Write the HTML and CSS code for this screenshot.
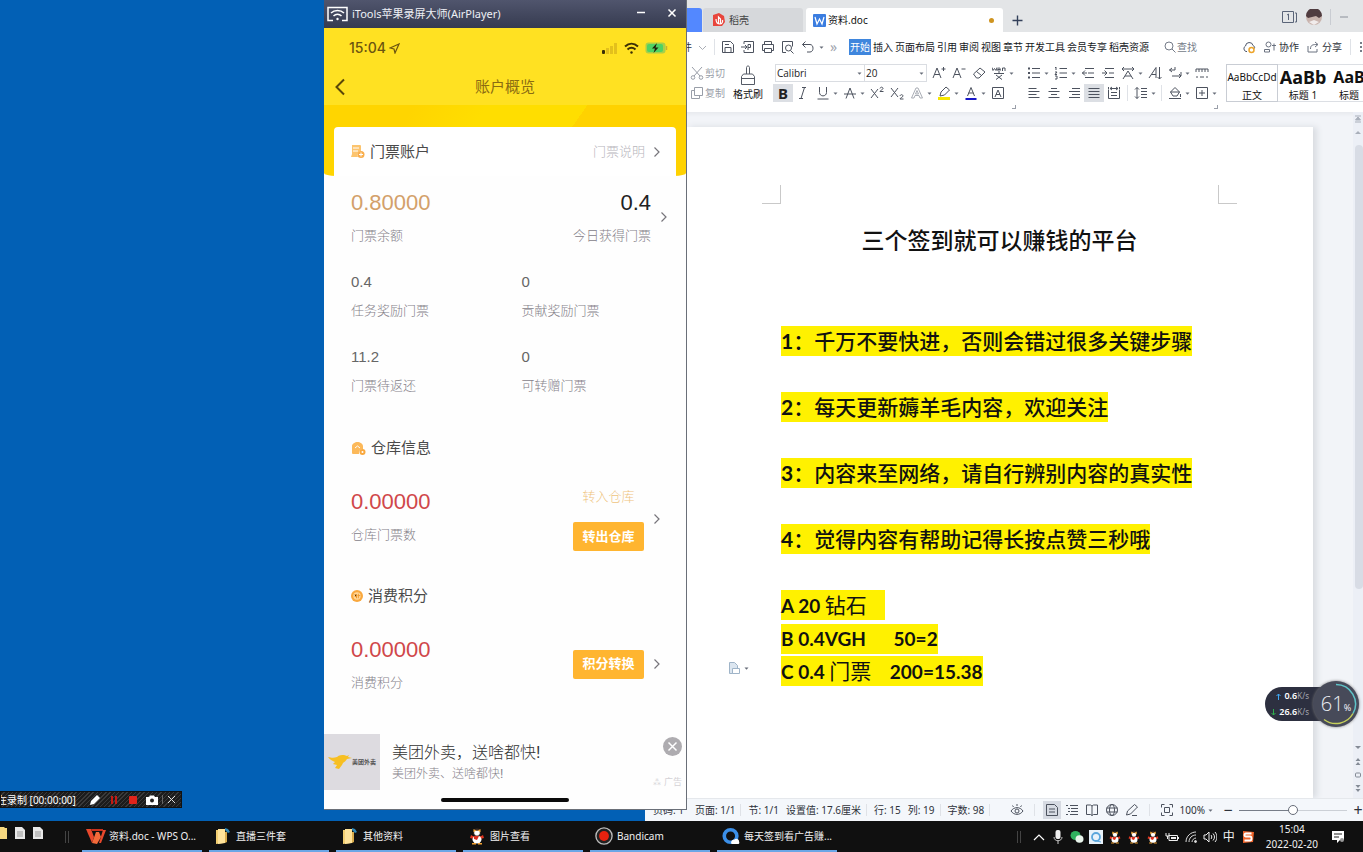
FILE: index.html
```html
<!DOCTYPE html>
<html lang="zh-CN">
<head>
<meta charset="utf-8">
<title>资料.doc - WPS Office</title>
<link rel="stylesheet" href="styles.css">
</head>
<body>
<svg class="defs" aria-hidden="true">
  <symbol id="chev" viewBox="0 0 10 12"><path d="M2.500 1.500l4.500 4.500-4.500 4.500" fill="none" stroke="currentColor" stroke-width="1.200"/></symbol>
  <symbol id="caret" viewBox="0 0 7 7"><path d="M1.500 2.500h4l-2 2.200z" fill="currentColor"/></symbol>
  <symbol id="folder" viewBox="0 0 18 18"><path d="M2 3h7l1 1v12l-8 1z" fill="#f3cf72"/><path d="M4 2h7v14l-7 1z" fill="#ffe39a"/><path d="M11 5h2v10l-2 1z" fill="#d8ab4c"/><path d="M11 1l3 1 2 3-2 1-3-3z" fill="#2f87b8"/></symbol>
  <symbol id="penguin" viewBox="0 0 18 18"><ellipse cx="9" cy="5.500" rx="3.800" ry="4" fill="#3b2a22"/><path d="M5.500 2l3.500 2 3.500-2v3h-7z" fill="#f2a93b"/><ellipse cx="9" cy="6" rx="2.800" ry="2.200" fill="#fff"/><path d="M3 8c3 2 9 2 12 0l1 3-4 1H6l-4-1z" fill="#e0351f"/><ellipse cx="9" cy="12.500" rx="4.500" ry="4" fill="#fff"/><path d="M6 9h5l-2 4-3-1z" fill="#d92c1c"/><path d="M4 16h4v1.500H4zM10 16h4v1.500h-4z" fill="#f0a030"/></symbol>
</svg>

<main class="desktop">
  <section class="wps" aria-label="WPS">
    <header class="tabs">
      <button class="home-tab" aria-label="首页"></button>
      <button class="tab">
        <svg width="12" height="14" viewBox="0 0 12 14"><path d="M0 2l6-2 5 3 1 6-3 4H0z" fill="#e8453c"/><path d="M5.500 11V4l2 2v5M3 6c0 3 1 5 4 5 2 0 3-2 2.500-4" fill="none" stroke="#fff" stroke-width="1.200"/></svg>
        <span>稻壳</span></button>
      <button class="tab active">
        <svg width="13" height="13" viewBox="0 0 13 13"><rect width="13" height="13" rx="1" fill="#3b7de0"/><path d="M2 3l2 7 2.500-5L9 10l2-7" fill="none" stroke="#fff" stroke-width="1.200"/></svg>
        <span>资料.doc</span><i class="dot"></i></button>
      <button class="new-tab" aria-label="新建"><svg width="11" height="11" viewBox="0 0 11 11"><path d="M5.500 .5v10M.5 5.500h10" stroke="#33405a" stroke-width="1.400"/></svg></button>
      <div class="win-right">
        <svg width="16" height="12" viewBox="0 0 16 12" fill="none" stroke="#5a6478"><path d="M.5 .5h11v11H.5zM13 2h1.500v9H13"/><path d="M5 4l1.500-1v6" /></svg>
        <svg width="16" height="16" viewBox="0 0 16 16"><circle cx="8" cy="8" r="8" fill="#c9b4ae"/><path d="M0 7a8 8 0 0 1 16 0l-3 2-3-2-4 1-4 1z" fill="#503c40"/><path d="M3 13l5-2 5 2-5 3z" fill="#f1ecec"/></svg>
        <i class="sep"></i>
        <svg width="10" height="10" viewBox="0 0 10 10"><path d="M1 5h8" stroke="#8b909a"/></svg>
      </div>
    </header>

    <nav class="menu">
      <div class="quick">
        <button class="file">文件</button>
        <svg width="9" height="9" viewBox="0 0 9 9" class="pale"><path d="M1 3l3.500 3.500L8 3" fill="none" stroke="currentColor"/></svg>
        <i class="sep"></i>
      </div>
      <div class="quick-icons">
        <button aria-label="保存"><svg viewBox="0 0 14 14"><path d="M1.500 1.500h8l3 3v8h-11zM4 12.500v-5h6v5M4 4.500h4"/></svg></button>
        <button aria-label="输出"><svg viewBox="0 0 14 14"><path d="M3 4V1.500h9.500v11H3V10M0 7h6M4 5l2 2-2 2M7 10V4.500h2.500v3H7"/></svg></button>
        <button aria-label="打印"><svg viewBox="0 0 14 14"><path d="M3.500 4.500v-3h7v3M3.500 10.500h-2v-6h11v6h-2M3.500 8.500h7v4h-7z"/></svg></button>
        <button aria-label="预览"><svg viewBox="0 0 14 14"><path d="M5 12.500H1.500v-11h10v5M9.500 10.500l3 3"/><circle cx="7.500" cy="8" r="3"/></svg></button>
        <button aria-label="撤销"><svg viewBox="0 0 14 14"><path d="M4.500 1.500l-3 3 3 3M1.500 4.500H9c4 0 4 7.500 0 7.500H6"/></svg></button>
        <svg class="caret"><use href="#caret"/></svg>
      </div>
      <span class="more">»</span>
      <div class="menu-items">
        <button class="current">开始</button><button>插入</button><button>页面布局</button><button>引用</button><button>审阅</button><button>视图</button><button>章节</button><button>开发工具</button><button>会员专享</button><button>稻壳资源</button>
      </div>
      <button class="find"><svg width="12" height="12" viewBox="0 0 12 12" fill="none" stroke="currentColor"><circle cx="5" cy="5" r="4"/><path d="M8 8l3.500 3.500"/></svg>查找</button>
      <div class="menu-right">
        <svg width="14" height="14" viewBox="0 0 14 14" fill="none" stroke="#4c5568"><path d="M5 11.500H4A3 3 0 0 1 3.500 6 3.800 3.800 0 0 1 11 5.500c1 .5 2 1.500 1.500 3"/><circle cx="9.500" cy="10" r="2.500" stroke="#eda52b" stroke-width="1.500"/></svg>
        <button><svg width="12" height="12" viewBox="0 0 12 12" fill="none" stroke="#6b7280"><circle cx="4.500" cy="3.500" r="2.500"/><path d="M.5 11V8.500h5V11H.5M8 4.500h4M10 2.500v7"/></svg>协作</button>
        <button><svg width="12" height="12" viewBox="0 0 12 12" fill="none" stroke="#6b7280"><path d="M1 5v6h9V8M3.500 8c0-4 2-4.500 7-4.500M8 1l3 2.500L8 6"/></svg>分享</button>
        <i class="sep"></i>
        <svg width="4" height="12" viewBox="0 0 4 12"><path d="M1 1h2v2H1zM1 5h2v2H1zM1 9h2v2H1z" fill="#777d88"/></svg>
      </div>
    </nav>

    <section class="ribbon">
      <div class="clip">
        <button><svg width="14" height="14" viewBox="0 0 14 14" fill="none" stroke="currentColor"><path d="M2 1l8 9M12 1l-8 9"/><circle cx="3" cy="11.500" r="1.800"/><circle cx="11" cy="11.500" r="1.800"/></svg>剪切</button>
        <button><svg width="14" height="14" viewBox="0 0 14 14" fill="none" stroke="currentColor"><path d="M4.500 1.500h8v8h-8zM4.500 4.500h-3v8h8v-3"/></svg>复制</button>
      </div>
      <button class="painter"><svg width="16" height="20" viewBox="0 0 16 20" fill="none" stroke="#555b66"><path d="M6.500 9V2.500c0-2 3-2 3 0V9M1.500 19.500v-8l2-2.500h9l2 2.500v8zM1.500 13.500h13"/></svg>格式刷</button>
      <div class="group font-group">
        <div class="tools">
          <div class="combos">
            <label><select aria-label="字体"><option>Calibri</option></select><svg class="caret"><use href="#caret"/></svg></label>
            <label class="size"><select aria-label="字号"><option>20</option></select><svg class="caret"><use href="#caret"/></svg></label>
          </div>
          <button aria-label="增大字号"><svg viewBox="0 0 14 14"><path d="M1 12L5 2l4 10M2.500 8.500h5M9.500 3h4M11.500 1v4"/></svg></button>
          <button aria-label="减小字号"><svg viewBox="0 0 14 14"><path d="M1 12L5 2l4 10M2.500 8.500h5M9.500 3h4"/></svg></button>
          <button aria-label="清除格式"><svg viewBox="0 0 14 14"><path d="M1.500 8L8 2l5 4-6 6H4.500zM4.500 5.500l5 4"/></svg></button>
          <button aria-label="拼音"><svg viewBox="0 0 14 14"><path d="M0 1.500l1 3 1.500-2 1.500 2 1-3M6 3.500h2.500c0-2-3-2-3 0s2 2 3 1M10.500 5V2h2.500v3M2 7.500h10M4 9l6 4.500M10 9l-6 4.500M7 6v1.500"/></svg></button>
          <svg class="caret"><use href="#caret"/></svg>
        </div>
        <div class="tools">
          <button class="on bold" aria-label="加粗">B</button>
          <button aria-label="倾斜"><svg viewBox="0 0 14 14"><path d="M6 1.500h4M3 12.500h4M8.500 1.500l-3.500 11"/></svg></button>
          <button aria-label="下划线"><svg viewBox="0 0 14 14"><path d="M3.500 1v5.500c0 4.500 7 4.500 7 0V1M1.500 13h11"/></svg></button><svg class="caret"><use href="#caret"/></svg>
          <button aria-label="删除线"><svg viewBox="0 0 14 14"><path d="M3 12.500L7 2l4 10.500M1 8h12"/></svg></button><svg class="caret"><use href="#caret"/></svg>
          <button aria-label="上标"><svg viewBox="0 0 14 14"><path d="M1 3l7 9M8 3l-7 9M10 2.500c.5-2 3-1.500 3 0 0 1-3 2-3 3h3.500"/></svg></button>
          <button aria-label="下标"><svg viewBox="0 0 14 14"><path d="M1 2l7 9M8 2l-7 9M10 10c.5-2 3-1.500 3 0 0 1-3 2-3 3h3.500"/></svg></button>
          <button aria-label="文字效果"><svg viewBox="0 0 14 14" class="pale"><path d="M1.500 12L6 2h2l4.500 10H10L9 9.500H5L4 12zM5.500 8h3L7 4.500z"/></svg></button><svg class="caret"><use href="#caret"/></svg>
          <button aria-label="突出显示"><svg viewBox="0 0 14 14"><path d="M1 12.500h12" stroke="#f7e600" stroke-width="3"/><path d="M3 10l1-4 5-5 3.500 3-5 5z"/></svg></button><svg class="caret"><use href="#caret"/></svg>
          <button aria-label="字体颜色"><svg viewBox="0 0 14 14"><path d="M3.500 10L7 1.500l3.500 8.500M4.500 7h5"/><path d="M1.500 13h11" stroke="#1717c8" stroke-width="2"/></svg></button><svg class="caret"><use href="#caret"/></svg>
          <button aria-label="字符底纹"><svg viewBox="0 0 14 14"><path d="M1.500 1.500h11v11h-11zM4 11l3-7 3 7M5 8.500h4"/></svg></button>
        </div>
        <i class="launcher"></i>
      </div>
      <div class="group para-group">
        <div class="tools">
          <button aria-label="项目符号"><svg viewBox="0 0 14 14"><path d="M5 2.500h8M5 7h8M5 11.500h8"/><path d="M1 2.500h2M1 7h2M1 11.500h2" stroke-width="2"/></svg></button><svg class="caret"><use href="#caret"/></svg>
          <button aria-label="编号"><svg viewBox="0 0 14 14"><path d="M5.500 2.500H13M5.500 7H13M5.500 11.500H13M1 2l1-1v3M1 6h2l-2 2.500h2M1 10h2v3H1"/></svg></button><svg class="caret"><use href="#caret"/></svg>
          <button aria-label="减少缩进"><svg viewBox="0 0 14 14"><path d="M4 2.500h9M7 7h6M4 11.500h9M4 4.500L1.500 7 4 9.500M1 7h5"/></svg></button>
          <button aria-label="增加缩进"><svg viewBox="0 0 14 14"><path d="M4 2.500h9M8 7h5M4 11.500h9M3.500 4.500L6 7 3.500 9.500M1 7h5"/></svg></button>
          <button aria-label="中文版式"><svg viewBox="0 0 14 14"><path d="M1 3h12M3 1L1 3l2 2M11 1l2 2-2 2M2 13l5-8 5 8M4 10h6"/></svg></button><svg class="caret"><use href="#caret"/></svg>
          <button aria-label="排序"><svg viewBox="0 0 14 14"><path d="M1 12L8 1.500V12M3.500 8.500H8M11.500 1v12M9.500 11l2 2 2-2"/></svg></button>
          <button aria-label="换行"><svg viewBox="0 0 14 14"><path d="M4 2L1.500 4 4 6M1.500 4H7V1M4 10h9V6M11 8l2 2-2 2"/></svg></button><svg class="caret"><use href="#caret"/></svg>
          <button aria-label="标尺"><svg viewBox="0 0 14 14"><path d="M1 6V3h12v3M4 3v3M7 3v3M10 3v3M1 11h2M5 11h4M11 11h2"/></svg></button>
        </div>
        <div class="tools">
          <button aria-label="左对齐"><svg viewBox="0 0 14 14"><path d="M1.500 2.500h8M1.500 5.500h11M1.500 8.500h8M1.500 11.500h11"/></svg></button>
          <button aria-label="居中"><svg viewBox="0 0 14 14"><path d="M4 2.500h6M1.500 5.500h11M4 8.500h6M1.500 11.500h11"/></svg></button>
          <button aria-label="右对齐"><svg viewBox="0 0 14 14"><path d="M5 2.500h8M2 5.500h11M5 8.500h8M2 11.500h11"/></svg></button>
          <button class="on" aria-label="两端对齐"><svg viewBox="0 0 14 14"><path d="M1.500 2.500h11M1.500 5.500h11M1.500 8.500h11M1.500 11.500h11"/></svg></button>
          <button aria-label="分散对齐"><svg viewBox="0 0 14 14"><path d="M1.500 3.500v9h11v-9M1.500 1v2M12.500 1v2M3 2.500h8M5 1L3 2.500 5 4M9 1l2 1.500L9 4M4 6.500h6M4 9.500h6"/></svg></button>
          <i class="sep"></i>
          <button aria-label="行距"><svg viewBox="0 0 14 14"><path d="M3 1.500v11M1 3.500l2-2 2 2M1 10.500l2 2 2-2M7 2.500h6M7 5.500h6M7 8.500h6M7 11.500h6"/></svg></button><svg class="caret"><use href="#caret"/></svg>
          <i class="sep"></i>
          <button aria-label="底纹"><svg viewBox="0 0 14 14"><path d="M2.500 6L7 1.500 11.500 6 9 10H5zM2.500 6h9M12.500 8v3M1 12.500h12"/></svg></button><svg class="caret"><use href="#caret"/></svg>
          <button aria-label="边框"><svg viewBox="0 0 14 14"><path d="M1.500 1.500h11v11h-11zM7 4v6M4 7h6"/></svg></button><svg class="caret"><use href="#caret"/></svg>
        </div>
        <i class="launcher"></i>
      </div>
      <div class="styles">
        <button class="style chosen"><span>AaBbCcDd</span>正文</button>
        <button class="style h1"><span>AaBb</span>标题 1</button>
        <button class="style h2"><span>AaB</span>标题</button>
      </div>
    </section>

    <section class="doc">
      <article class="paper">
        <div class="crops"><i></i><i></i></div>
        <h1>三个签到就可以赚钱的平台</h1>
        <p class="spaced"><mark><b>1</b>：千万不要快进，否则会错过很多关键步骤</mark></p>
        <p class="spaced"><mark><b>2</b>：每天更新薅羊毛内容，欢迎关注</mark></p>
        <p class="spaced"><mark><b>3</b>：内容来至网络，请自行辨别内容的真实性</mark></p>
        <p class="spaced"><mark><b>4</b>：觉得内容有帮助记得长按点赞三秒哦</mark></p>
        <p class="short"><mark>A 20 <span class="thin">钻石</span>    </mark></p>
        <p class="short"><mark>B 0.4VGH      50=2</mark></p>
        <p class="short"><mark>C 0.4 <span class="thin">门票</span>    200=15.38</mark>
          <button class="paste" aria-label="粘贴选项"><svg width="12" height="12" viewBox="0 0 12 12" fill="#dce6f0" stroke="#9fb4c8"><path d="M1.500 .5h5l3 3v8h-8z"/><path d="M4.500 6.500h7v5h-7z" fill="#fff"/></svg><svg class="caret"><use href="#caret"/></svg></button></p>
      </article>
      <aside class="scroll">
        <svg width="10" height="10" viewBox="0 0 10 10"><path d="M2 2h6M5 3l2.500 3h-5zM2 8h6" stroke="#a9afba" fill="#a9afba"/></svg>
        <svg width="10" height="10" viewBox="0 0 10 10"><path d="M2 6h6L5 3z" fill="#a9afba"/></svg>
        <i class="thumb"></i>
        <div class="scroll-foot">
          <svg width="8" height="8" viewBox="0 0 8 8"><path d="M1 3h6L4 6z" fill="#858b96"/></svg>
          <svg width="8" height="8" viewBox="0 0 8 8"><path d="M1.500 4h5L4 1zM1.500 8h5L4 5z" fill="#858b96"/></svg>
          <svg width="8" height="8" viewBox="0 0 8 8"><rect x="1.500" y="2" width="5" height="4" rx="1" fill="none" stroke="#858b96"/></svg>
          <svg width="8" height="8" viewBox="0 0 8 8"><path d="M1.500 0h5L4 3zM1.500 4h5L4 7z" fill="#858b96"/></svg>
        </div>
      </aside>
    </section>

    <footer class="status">
      <span class="pageno">页码: 1</span><span>页面: 1/1</span><i class="sep"></i><span>节: 1/1</span><span class="set">设置值: 17.6厘米</span><i class="sep"></i><span>行: 15</span><span>列: 19</span><i class="sep"></i><span>字数: 98</span><i class="sep"></i>
      <div class="view">
        <svg viewBox="0 0 14 14"><path d="M1 8c3-4.500 9-4.500 12 0-3 4.500-9 4.500-12 0zM7 1v2M2.500 2.500l1 1.500M11.500 2.500l-1 1.500"/><circle cx="7" cy="8" r="2"/></svg>
        <i class="sep"></i>
        <button class="on" aria-label="页面视图"><svg viewBox="0 0 14 14"><path d="M1.500 1.500h8l3 3v8h-11zM4 6h6M4 9h6"/></svg></button>
        <button aria-label="大纲"><svg viewBox="0 0 14 14"><path d="M1 2.500h2M5 2.500h8M3 5.500h2M6 5.500h7M3 8.500h2M6 8.500h7M1 11.500h2M5 11.500h8"/></svg></button>
        <button aria-label="阅读"><svg viewBox="0 0 14 14"><path d="M7 3v9.500M1.500 2h4L7 3l1.500-1h4v9.500h-4L7 12.500l-1.500-1h-4z"/></svg></button>
        <button aria-label="网页"><svg viewBox="0 0 14 14"><circle cx="7" cy="7" r="5.500"/><ellipse cx="7" cy="7" rx="2.500" ry="5.500"/><path d="M1.500 5h11M1.500 9h11"/></svg></button>
        <button aria-label="书写"><svg viewBox="0 0 14 14"><path d="M1.500 12l1-4 7-6.500 3 2.500-7 7zM7 12.500h5"/></svg></button>
        <i class="sep"></i>
        <svg viewBox="0 0 14 14"><path d="M1.500 4.500v-3h3M9.500 1.500h3v3M12.500 9.500v3h-3M4.500 12.500h-3v-3M4.500 4.500h5v5h-5z"/></svg>
        <span>100%</span><svg class="caret"><use href="#caret"/></svg>
        <button class="zoom" aria-label="缩小">−</button>
        <input type="range" min="0" max="100" value="50" aria-label="缩放">
        <button class="zoom" aria-label="放大">+</button>
      </div>
    </footer>
  </section>

  <section class="phone" aria-label="AirPlayer">
    <header class="phone-title">
      <svg width="21" height="16" viewBox="0 0 21 16" fill="none" stroke="#fff" stroke-width="1.500"><path d="M6 14.500H1v-13h19v13h-5"/><path d="M4 7c3.500-3.500 9.500-3.500 13 0M6.500 10c2.300-2.300 5.700-2.300 8 0"/><circle cx="10.500" cy="13" r="1.200" fill="#fff" stroke="none"/></svg>
      <span>iTools苹果录屏大师(AirPlayer)</span>
      <button aria-label="最小化"><svg width="10" height="10" viewBox="0 0 10 10"><path d="M1 3.500h8" stroke="#fff" stroke-width="1.500"/></svg></button>
      <button aria-label="关闭"><svg width="10" height="10" viewBox="0 0 10 10"><path d="M1.500 .5l7 7M8.500 .5l-7 7" stroke="#fff" stroke-width="1.500"/></svg></button>
    </header>
    <div class="phone-head">
      <div class="ios">
        <span>15:04</span>
        <svg width="11" height="11" viewBox="0 0 11 11"><path d="M1 5l9-4-4 9-1-4z" fill="none" stroke="#6b5410" stroke-width="1.200"/></svg>
        <div class="ios-right">
          <svg width="17" height="12" viewBox="0 0 17 12"><rect x="1" y="8" width="3" height="4" rx="1" fill="#3b2f06"/><path d="M5 6h3v6H5zM9 4h3v8H9zM13 1h3v11h-3z" fill="#e3c01c"/></svg>
          <svg width="15" height="12" viewBox="0 0 15 12" fill="none" stroke="#3b2f06" stroke-width="2"><path d="M1 4.500c4-3.800 9-3.800 13 0M3.500 7.500c2.500-2.200 5.500-2.200 8 0"/><circle cx="7.500" cy="10.500" r="1.200" fill="#3b2f06" stroke="none"/></svg>
          <svg width="23" height="12" viewBox="0 0 23 12"><rect x=".5" y=".5" width="20" height="11" rx="3" fill="#a8cf4a"/><rect x="2" y="2" width="16" height="8" rx="2" fill="#4fd263"/><path d="M21.500 4v4" stroke="#c9b030" stroke-width="1.500"/><path d="M12 1L7 6.500h3L8.500 11l5-5.500h-3z" fill="#221e08"/></svg>
        </div>
      </div>
      <div class="nav">
        <button aria-label="返回"><svg width="12" height="18" viewBox="0 0 12 18"><path d="M10 1.500L2.500 9l7.500 7.500" fill="none" stroke="#5a4708" stroke-width="2"/></svg></button>
        <h2>账户概览</h2><i></i>
      </div>
    </div>
    <div class="hero"><div class="card-head">
      <svg width="15" height="15" viewBox="0 0 15 15"><path d="M2 1h8a1 1 0 0 1 1 1v5a4 4 0 0 0-3 6H1l1-3z" fill="#fcc46e"/><path d="M3 4h6M3 7h5" stroke="#fff"/><circle cx="11" cy="10.500" r="3.500" fill="#f9ae4c"/><path d="M11 8.500v4M9 10.500h4" stroke="#fff"/></svg>
      <h3>门票账户</h3><a href="#explain">门票说明</a><svg class="chev"><use href="#chev"/></svg>
    </div></div>
    <div class="phone-body">
      <div class="summary">
        <div class="stat big gold"><b>0.80000</b><span>门票余额</span></div>
        <div class="stat big end"><b>0.4</b><span>今日获得门票</span></div>
        <svg class="chev"><use href="#chev"/></svg>
      </div>
      <div class="stats">
        <div class="stat"><b>0.4</b><span>任务奖励门票</span></div>
        <div class="stat"><b>0</b><span>贡献奖励门票</span></div>
        <div class="stat"><b>11.2</b><span>门票待返还</span></div>
        <div class="stat"><b>0</b><span>可转赠门票</span></div>
      </div>
      <div class="sect"><svg width="15" height="15" viewBox="0 0 15 15"><path d="M1 5c0-2 3-4 5.500-4S12 3 12 5v3a4 4 0 0 0-4 5H2a1 1 0 0 1-1-1z" fill="#fcb95a"/><path d="M4 7l2.500-2L9 7" stroke="#fff" fill="none"/><circle cx="11.500" cy="11" r="3" fill="#f9a83e"/><circle cx="11.500" cy="11" r="1" fill="#fff"/></svg><h3>仓库信息</h3></div>
      <div class="account">
        <div class="stat big red"><b>0.00000</b><span>仓库门票数</span></div>
        <div class="actions"><button class="link">转入仓库</button><button class="fill">转出仓库</button></div>
        <svg class="chev"><use href="#chev"/></svg>
      </div>
      <div class="sect last-sect"><svg width="12" height="12" viewBox="0 0 13 13"><circle cx="6.500" cy="6.500" r="6.500" fill="#f9a83e"/><circle cx="6.500" cy="6.500" r="4" fill="#ffd79a"/><path d="M4 5h2v4M4 7h2M8 4v5M7 6h3" stroke="#f39a2a"/></svg><h3>消费积分</h3></div>
      <div class="account middle">
        <div class="stat big red"><b>0.00000</b><span>消费积分</span></div>
        <div class="actions"><button class="fill">积分转换</button></div>
        <svg class="chev"><use href="#chev"/></svg>
      </div>
    </div>
    <div class="ad">
      <div class="ad-pic"><svg width="24" height="16" viewBox="0 0 24 16"><path d="M0 3c4 1 6 1 9 0 2-2 5-2 7-2l3 1 2-1-1 2 4 1-5 1c-1 2-3 3-4 4l-1 2-3 4-4-1 2-3-4-1 2-2C5 7 2 6 0 3z" fill="#f7bf22"/></svg><small>美团外卖</small></div>
      <div class="ad-text"><strong>美团外卖，送啥都快!</strong><span>美团外卖、送啥都快!</span></div>
      <div class="ad-end"><button aria-label="关闭广告"><svg width="19" height="19" viewBox="0 0 19 19"><circle cx="9.500" cy="9.500" r="9.500" fill="#aeacb0"/><path d="M5.500 5.500l8 8M13.500 5.500l-8 8" stroke="#fff" stroke-width="1.500"/></svg></button><small>⁂ 广告</small></div>
    </div>
    <div class="home-area"><i></i></div>
  </section>

  <div class="recorder">
    <span>在录制 [00:00:00]</span>
    <button aria-label="画笔"><svg width="12" height="12" viewBox="0 0 12 12"><path d="M1 11l1-4 6-6 3 3-6 6z" fill="#fff"/></svg></button>
    <button aria-label="暂停"><svg width="12" height="12" viewBox="0 0 12 12"><path d="M4 2v8M8 2v8" stroke="#c41a14" stroke-width="2"/></svg></button>
    <button aria-label="停止"><svg width="12" height="12" viewBox="0 0 12 12"><rect x="2" y="2" width="8" height="8" rx="1" fill="#e0241b"/></svg></button>
    <button aria-label="截图"><svg width="12" height="12" viewBox="0 0 12 12"><path d="M0 3h3l1-1.500h4L9 3h3v8H0z" fill="#fff"/><circle cx="6" cy="6.500" r="2" fill="#222"/></svg></button>
    <i></i>
    <button aria-label="关闭"><svg width="9" height="9" viewBox="0 0 9 9"><path d="M1 1l7 7M8 1L1 8" stroke="#ddd"/></svg></button>
  </div>

  <div class="speed">
    <div class="rates">
      <span><svg width="5" height="7" viewBox="0 0 5 7"><path d="M2.500 7V1M.5 3l2-2 2 2" stroke="#3fa9f5" fill="none"/></svg><b>0.6</b>K/s</span>
      <span><svg width="5" height="7" viewBox="0 0 5 7"><path d="M2.500 0v6M.5 4l2 2 2-2" stroke="#2fae4d" fill="none"/></svg><b>26.6</b>K/s</span>
    </div>
    <div class="dial"><svg class="ring" viewBox="0 0 46 46" fill="none" stroke-width="1.500"><path d="M23 3.500a19.500 19.500 0 0 1 17 29" stroke="#5fc4c8"/><path d="M40 32.500a19.500 19.500 0 0 1-29 6" stroke="#c5cf5a"/></svg><span>61</span><small>%</small></div>
  </div>
</main>

<footer class="taskbar">
  <div class="pins">
    <svg width="8" height="14" viewBox="0 0 8 14"><path d="M0 1h4l1 1h2v11H0z" fill="#f7d880"/></svg>
    <svg width="12" height="14" viewBox="0 0 12 14"><path d="M1 1h7l3 3v9H1z" fill="#e8e8e8"/><path d="M3 6h6M3 8h6M3 10h6" stroke="#999"/></svg>
    <svg width="12" height="14" viewBox="0 0 12 14"><path d="M1 1h7l3 3v9H1z" fill="#e8e8e8"/><path d="M3 6h6M3 8h6M3 10h6" stroke="#999"/></svg>
    <i class="grip"></i>
  </div>
  <div class="tasks">
    <button><svg class="app" viewBox="0 0 20 18"><path d="M0 2h5l3 8-2 6z" fill="#e8482c"/><path d="M6 16l4-11h3l2 5-4 7z" fill="#f26a3a"/><path d="M5 2h12v2H6z" fill="#c9311c"/><path d="M13 16l4-13h3l-5 13z" fill="#e8482c"/></svg>资料.doc - WPS O...</button>
    <button><svg class="app"><use href="#folder"/></svg>直播三件套</button>
    <button><svg class="app"><use href="#folder"/></svg>其他资料</button>
    <button><svg class="app"><use href="#penguin"/></svg>图片查看</button>
    <button><svg class="app" viewBox="0 0 20 20"><circle cx="10" cy="10" r="9" fill="#222" stroke="#bbb" stroke-width="1.500"/><circle cx="10" cy="10" r="5.500" fill="#e8220f"/></svg>Bandicam</button>
    <button><svg class="app" viewBox="0 0 20 20"><circle cx="9.500" cy="10" r="7" fill="none" stroke="#3b8fe8" stroke-width="4"/><path d="M10 18c0-3 2-4 4-4 1-2 5-1 5 2 1 3-1 3-2 3h-6z" fill="#fff"/></svg>每天签到看广告赚...</button>
  </div>
  <div class="tray">
    <i class="grip"></i>
    <svg viewBox="0 0 14 14"><path d="M2 10l5-5 5 5" fill="none" stroke="#fff" stroke-width="1.200"/></svg>
    <svg viewBox="0 0 14 14"><rect x="4.500" y="0" width="5" height="9" rx="2" fill="#eee"/><path d="M3 7c0 5 8 5 8 0M7 11v3" fill="none" stroke="#ccc"/></svg>
    <svg viewBox="0 0 14 14"><ellipse cx="5.500" cy="5.500" rx="5" ry="4.500" fill="#2fb35f"/><ellipse cx="9.500" cy="9" rx="4" ry="3.800" fill="#e9f5ec"/></svg>
    <svg viewBox="0 0 14 14"><rect width="14" height="14" fill="#e8f2fa"/><circle cx="7" cy="7" r="4" fill="none" stroke="#5aa6dc" stroke-width="1.800"/><path d="M8 11l4 1" stroke="#5aa6dc"/></svg>
    <svg><use href="#penguin"/></svg><svg><use href="#penguin"/></svg><svg><use href="#penguin"/></svg>
    <svg viewBox="0 0 14 14"><path d="M4 5.500h8.500v5H4zM13.500 7v2M1 3v3h3V3M2.500 6v3" fill="none" stroke="#eee"/><path d="M6 7h5v2H6z" fill="#eee"/></svg>
    <svg viewBox="0 0 14 14" fill="none" stroke="#ddd"><path d="M2 12C2 6 7 2 12 2M5 12c0-4 3-7 7-7M8 12c0-2 2-4 4-4"/><circle cx="11.500" cy="11.500" r="1" fill="#ddd"/></svg>
    <svg viewBox="0 0 14 14" fill="none" stroke="#eee"><path d="M1 5h2l3-3v10L3 9H1zM8 5c1 1 1 3 0 4M10 3.500c2 2 2 5 0 7M12 2c2.500 3 2.500 7 0 10"/></svg>
    <span class="ime">中</span>
    <svg viewBox="0 0 14 14"><path d="M2 1l11 1-1 10-10 1z" fill="#f0642a"/><path d="M10.500 3.500H5c-2 0-2 3 0 3h4c2 0 2 4 0 4H3.500" fill="none" stroke="#fff" stroke-width="1.800"/></svg>
    <time><span>15:04</span><span>2022-02-20</span></time>
    <svg viewBox="0 0 14 14"><path d="M1 1h12v9H9l-3 3v-3H1z" fill="#fff"/><path d="M3 4h8M3 7h5" stroke="#222"/><circle cx="11" cy="10" r="2" fill="#999"/></svg>
  </div>
</footer>
</body>
</html>
```
FILE: styles.css
```css
* { box-sizing: border-box; }
body { margin: 0; height: 100vh; display: flex; flex-direction: column; overflow: hidden;
  background: #0260b5; color: #2e323a; font: 10px/16px "Noto Sans", "Noto Sans CJK SC", sans-serif; }
button { border: 0; padding: 0; margin: 0; background: none; color: inherit; font: inherit; white-space: nowrap; }
h1, h2, h3, p { margin: 0; font-weight: 400; }
svg { flex: none; display: block; }
.defs { position: absolute; width: 0; height: 0; }
.desktop { position: relative; flex: 1; min-height: 0; }
.sep { flex: none; width: 1px; height: 16px; background: #dfe2e7; }
.caret { width: 7px; height: 7px; color: #666c78; }
.pale { color: #a9adb5; }

.wps { position: absolute; inset: 0 0 0 645px; display: flex; flex-direction: column; overflow: hidden; background: #fff; }
.tabs { display: flex; align-items: flex-end; height: 32px; padding-left: 41px; background: #e3e5e7; }
.home-tab { width: 16px; height: 24px; background: #5388ff; border-radius: 0 3px 0 0; }
.tab { display: flex; align-items: center; gap: 4px; width: 100px; height: 24px; margin: 0 3px 0 1px; padding: 0 10px; background: #d6d8db; border-radius: 3px 3px 0 0; color: #444; }
.tab.active { width: 197px; margin: 0 9px 0 0; padding: 0 9px 0 7px; background: #fff; color: #111; gap: 2px; }
.dot { width: 5px; height: 5px; margin-left: auto; border-radius: 50%; background: #cf9420; }
.new-tab { height: 24px; display: flex; align-items: center; }
.win-right { display: flex; align-items: center; gap: 8px; height: 30px; margin-left: auto; padding-right: 14px; }
.win-right .sep { background: #c9ccd2; }

.menu { display: flex; align-items: center; height: 30px; padding-left: 27px; flex: none; }
.quick { display: flex; align-items: center; gap: 6px; }
.quick .sep { margin-left: 1px; }
.quick-icons { display: flex; align-items: center; padding-left: 3px; }
.quick-icons button { width: 20px; padding: 0 3px; }
.quick-icons svg:not(.caret), .tools button svg, .view svg:not(.caret) { width: 14px; height: 14px; fill: none; stroke: #4c525e; }
.tools button svg.pale { stroke: #a9adb5; }
.more { width: 8px; margin: 0 11px 0 5px; font-size: 14px; color: #a0a5ae; }
.menu-items { display: flex; gap: 2px; color: #16181d; }
.menu-items .current { width: 22px; background: #3f86dd; color: #fff; }
.find { display: flex; align-items: center; gap: 1px; margin-left: 15px; color: #747b88; }
.menu-right { display: flex; align-items: center; gap: 8px; margin-left: auto; }
.menu-right button { display: flex; align-items: center; gap: 3px; }

.ribbon { display: flex; align-items: flex-start; gap: 8px; height: 50px; padding-left: 45px; flex: none; white-space: nowrap; }
.clip { display: flex; flex-direction: column; gap: 4px; padding-top: 3px; color: #999ea8; }
.clip button { display: flex; align-items: center; gap: 1px; }
.painter { display: flex; flex-direction: column; align-items: center; gap: 1px; padding-top: 3px; color: #111; }
.group { position: relative; flex: none; height: 50px; display: flex; flex-direction: column; gap: 2px; padding-top: 2px; }
.font-group { width: 243px; margin-left: 2px; }
.para-group { width: 194px; }
.tools { display: flex; align-items: center; height: 18px; }
.tools button { width: 20px; padding: 0 3px; height: 18px; flex: none; }
.tools button svg { margin: 2px 0; }
.tools .caret { margin-left: -1px; margin-right: 1px; }
.tools .sep { margin: 0 3px; }
.tools .on { background: #dcdfe4; }
.bold { font-size: 15px; font-weight: 700; line-height: 18px; color: #222; }
.combos { display: flex; width: 153px; height: 18px; margin: 0 2px; border: 1px solid #dadde2; }
.combos label { display: flex; align-items: center; flex: 1; }
.combos .size { flex: none; width: 62px; border-left: 1px solid #dadde2; }
.combos select { appearance: none; flex: 1; min-width: 0; border: 0; padding: 0 1px; background: none; color: #222; font: 10px/16px "Open Sans", sans-serif; }
.launcher { position: absolute; right: 0; bottom: 3px; width: 4px; height: 4px; border: solid #9a9fa9; border-width: 0 1px 1px 0; }
.styles { display: flex; flex: none; align-items: flex-start; margin-top: 2px; border: 1px solid #dcdfe4; height: 38px; }
.style { display: flex; flex-direction: column; align-items: center; justify-content: flex-end; width: 52px; height: 36px; font-size: 10px; line-height: 12px; color: #111; }
.style span { line-height: 24px; }
.style.chosen { outline: 1px solid #c9cdd4; width: 50px; }
.h1 span { font-size: 18px; font-weight: 700; }
.h2 { width: 40px; }
.h2 span { font-size: 16px; font-weight: 700; }

.doc { position: relative; flex: 1; min-height: 0; display: flex; overflow: hidden; padding-left: 41px; background: linear-gradient(#e8eaee, #f2f4f8 5px); }
.paper { flex: 1; margin-top: 15px; padding: 58px 95px 0; background: #fff; box-shadow: 4px 0 6px #d9dce1; color: #111;
  font: 500 21px/33px "Noto Sans CJK SC", sans-serif; }
.crops { display: flex; justify-content: space-between; margin: 0 -19px; }
.crops i { width: 19px; height: 19px; border: solid #c9c9c9; border-width: 0 1px 1px 0; }
.crops i:last-child { border-width: 0 0 1px 1px; }
.paper h1 { margin: 19px 0 68px; text-align: center; font-size: 23px; line-height: 33px; font-weight: 500; }
.paper p { position: relative; white-space: pre; height: 33px; }
.paper .spaced { margin-bottom: 33px; }
mark { display: inline-block; height: 30px; line-height: 30px; margin-top: 1px; background: #fff100; color: #111; font-family: Lato, "Noto Sans CJK SC", sans-serif; font-weight: 500; }
mark b { font-weight: 700; }
.short mark { font-size: 19px; font-weight: 700; }
mark .thin { font-weight: 400; font-size: 21px; }
.paste { position: absolute; left: -53px; top: 8px; display: flex; align-items: center; gap: 3px; }
.scroll { flex: none; width: 10px; margin-left: 40px; display: flex; flex-direction: column; gap: 4px; padding-top: 2px; background: #eceff6; }
.thumb { height: 444px; margin: 3px 0 0 2px; border-radius: 4px; background: #d8dce5; }
.scroll-foot { display: flex; flex-direction: column; align-items: center; gap: 6px; margin-top: auto; padding-bottom: 5px; }

.status { display: flex; align-items: center; flex: none; gap: 7px; height: 23px; padding-left: 8px; background: #f4f7fb; border-top: 1px solid #e5e8ec; white-space: nowrap; }
.status .sep { margin-left: -2px; height: 12px; }
.pageno { width: 35px; }
.view { display: flex; align-items: center; gap: 6px; margin-left: auto; }
.status .view .sep { margin: 0 4px; }
.view button { flex: none; }
.view .on { padding: 2px; margin: 0 -2px; background: #d6dae2; }
.view .caret { margin: 0 3px 0 -4px; }
.zoom { width: 10px; font-size: 16px; line-height: 16px; }
.view input { appearance: none; width: 108px; height: 12px; margin: 0; background: linear-gradient(#777d88, #777d88) 0 50% / 50% 1px no-repeat, linear-gradient(#ccd0d6, #ccd0d6) 0 50% / 100% 1px no-repeat; }
.view input::-webkit-slider-thumb { appearance: none; width: 10px; height: 10px; border: 1px solid #666c78; border-radius: 50%; background: #fff; }

.phone { position: absolute; left: 324px; top: 0; width: 363px; bottom: 11px; display: flex; flex-direction: column; background: #fefefe; border: solid #6a6f78; border-width: 0 1px 1px 0; font-family: "Liberation Sans", "Noto Sans CJK SC", sans-serif; color: #4a4a4a; }
.phone-title { display: flex; align-items: center; gap: 4px; height: 28px; flex: none; padding: 0 9px 0 3px; background: linear-gradient(#50556d, #363b50); color: #eef0f5; font: 11px/18px "Noto Sans", "Noto Sans CJK SC", sans-serif; }
.phone-title span { flex: 1; }
.phone-title button { margin-left: 17px; height: 16px; }
.phone-head { flex: none; background: #ffe122; color: #6b5410; }
.ios { display: flex; align-items: center; gap: 3px; height: 40px; padding: 0 18px 0 25px; font: 500 14px/20px Inter, sans-serif; }
.ios-right { display: flex; align-items: center; gap: 6px; margin-left: auto; }
.nav { display: flex; align-items: center; justify-content: space-between; height: 37px; padding: 0 10px; }
.nav h2 { font-size: 15px; line-height: 20px; color: #8a6c12; }
.nav i { width: 12px; }
.hero { flex: none; padding: 22px 10px 0; background: linear-gradient(125deg, #ffd500 22%, #ffde00 40%, #ffde00 64%, #ffd200 64%); border-radius: 0 0 12px 12px / 0 0 3px 3px; }
.card-head { display: flex; align-items: center; height: 49px; padding: 0 14px 0 16px; gap: 5px; background: #fff; border-radius: 4px 4px 0 0; }
.card-head h3, .sect h3 { font-size: 15px; line-height: 24px; }
.card-head a { margin-left: auto; color: #b8b6bc; font-size: 13px; font-weight: 300; text-decoration: none; }
.card-head .chev { margin-left: 2px; }
.chev { width: 10px; height: 12px; color: #77757b; }
.phone-body { flex: 1; padding: 12px 0 0 27px; }
.summary { display: flex; align-items: center; justify-content: space-between; padding-right: 17px; }
.stat { display: flex; flex-direction: column; gap: 8px; }
.stat b { font-weight: 400; font-size: 15px; line-height: 20px; color: #666; }
.stat span { font-weight: 300; font-size: 13px; line-height: 20px; color: #858189; }
.stat.big b { font-size: 22px; line-height: 30px; }
.gold b { color: #d3a06a; }
.red b { color: #d0474a; }
.stat.gold b { color: #d3a06a; }
.stat.red b { color: #d0474a; }
.end { margin-left: auto; margin-right: 8px; align-items: flex-end; }
.stat.end b { color: #222; }
.stats { display: grid; grid-template-columns: 1fr 1fr; row-gap: 26px; padding-top: 26px; margin-right: -6px; }
.stats .stat { gap: 9px; }
.sect { display: flex; align-items: center; gap: 5px; margin: 40px 0 27px; }
.last-sect { margin-top: 33px; }
.account { display: flex; align-items: flex-start; gap: 8px; padding-right: 24px; }
.middle { align-items: center; }
.account .chev { align-self: center; }
.actions { display: flex; flex-direction: column; align-items: center; gap: 15px; margin-left: auto; }
.link { color: #efc47e; font-size: 13px; line-height: 20px; font-weight: 300; }
.fill { width: 71px; height: 29px; border-radius: 2px; background: #ffb530; color: #fff; font-size: 13px; font-weight: 700; }
.ad { display: flex; flex: none; height: 56px; }
.ad-pic { display: flex; align-items: center; justify-content: center; width: 56px; background: #dddbe0; }
.ad-pic small { width: 24px; font-size: 6px; font-weight: 700; color: #555; white-space: nowrap; }
.ad-text { display: flex; flex-direction: column; padding: 8px 12px; }
.ad-text strong { font-size: 16px; line-height: 22px; font-weight: 300; color: #333; }
.ad-text span { font-size: 12px; line-height: 20px; font-weight: 300; color: #858189; }
.ad-end { display: flex; flex-direction: column; align-items: flex-end; justify-content: space-between; margin-left: auto; padding: 3px 4px 0 0; color: #d4d2d6; }
.ad-end small { font-size: 9px; }
.home-area { display: flex; justify-content: center; flex: none; height: 19px; padding-top: 8px; }
.home-area i { width: 128px; height: 4px; border-radius: 2px; background: #0a0a0a; }

.recorder { position: absolute; left: 0; bottom: 13px; display: flex; align-items: center; gap: 7px; width: 182px; height: 17px; padding-right: 5px; overflow: hidden; border: 1px solid #111; background: repeating-linear-gradient(135deg, #1c1c1c 0 2px, #3a3a3a 2px 3px); color: #fff; }
.recorder span { flex: 1; margin-left: -4px; white-space: nowrap; }
.recorder i { width: 1px; height: 9px; margin: 0 -3px; background: #666; }

.speed { position: absolute; right: 4px; bottom: 94px; display: flex; align-items: center; }
.rates { width: 68px; height: 34px; margin-right: -20px; padding: 1px 24px 0 0; border-radius: 17px 0 0 17px; background: #2d3040; color: #a5a8b2; font-size: 8px; }
.rates span { display: flex; align-items: center; justify-content: flex-end; height: 16px; }
.rates svg { margin-right: 3px; }
.rates b { font-size: 9px; font-weight: 600; color: #fff; }
.dial { position: relative; display: flex; align-items: center; justify-content: center; width: 46px; height: 46px; border-radius: 50%; background: #474a59; color: #eef0f4; box-shadow: 0 0 3px #777; }
.dial span { font: 300 20px/24px "Open Sans", sans-serif; }
.dial small { font-size: 9px; padding-top: 8px; }
.ring { position: absolute; inset: 0; }

.taskbar { display: flex; flex: none; justify-content: space-between; height: 31px; background: #101010; color: #f0f0f0; }
.pins { display: flex; align-items: center; gap: 6px; width: 82px; padding-bottom: 8px; }
.pins .grip { margin: 8px 0 0 15px; }
.grip { width: 4px; height: 12px; border: solid #444; border-width: 0 1px; }
.tasks { display: flex; gap: 7px; flex: 1; min-width: 0; }
.tasks button { display: flex; align-items: center; gap: 3px; width: 120px; padding: 0 4px; border-bottom: 2px solid #6ba6e6; text-align: left; }
.app { width: 20px; height: 18px; }
.tray { display: flex; align-items: center; gap: 5px; padding-right: 18px; }
.tray svg { width: 14px; height: 14px; }
.tray .grip { margin-right: 6px; }
.ime { width: 14px; font-size: 12px; text-align: center; }
.tray time { margin: 0 8px 0 6px; }
time { display: flex; flex-direction: column; align-items: center; line-height: 15px; }
```
